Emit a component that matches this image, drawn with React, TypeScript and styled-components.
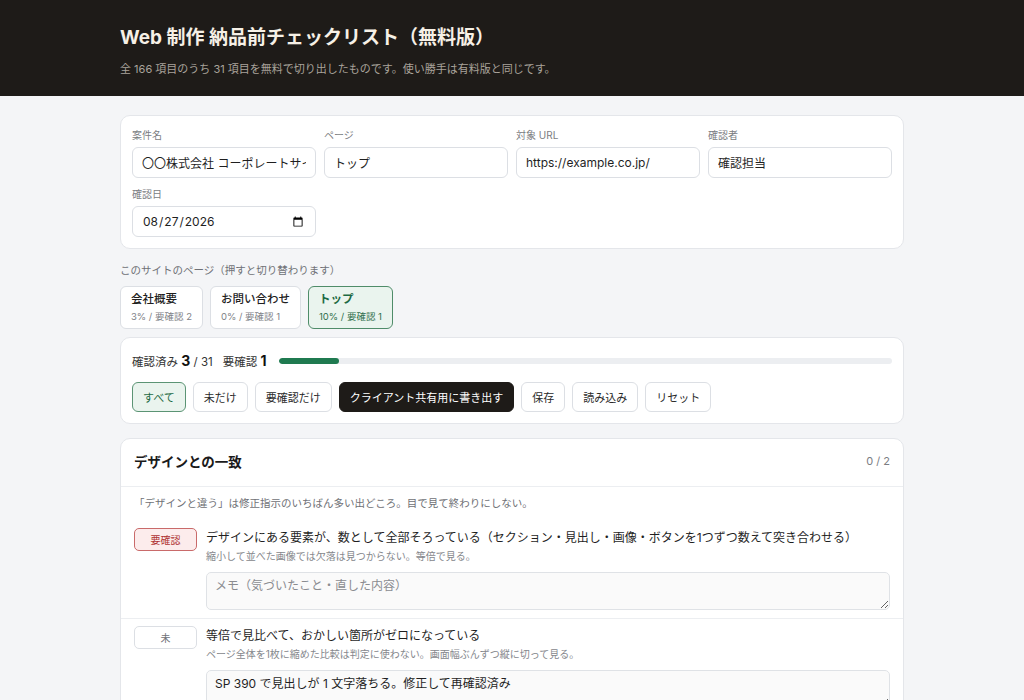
import React, { FC, useState } from 'react';
import styled, { createGlobalStyle, css } from 'styled-components';

const GlobalStyle = createGlobalStyle`
  body {
    margin: 0;
    background: #f4f5f7;
    font-family: 'Inter', 'Noto Sans CJK JP', sans-serif;
    color: #1f1f1f;
  }
  * { box-sizing: border-box; }
`;

type Status = 'none' | 'check' | 'ok';

interface Item {
  title: string;
  hint: string;
  memo: string;
  status: Status;
}

const pages = [
  { name: '会社概要', sub: '3% / 要確認 2', active: false },
  { name: 'お問い合わせ', sub: '0% / 要確認 1', active: false },
  { name: 'トップ', sub: '10% / 要確認 1', active: true },
];

const items: Item[] = [
  {
    title: 'デザインにある要素が、数として全部そろっている（セクション・見出し・画像・ボタンを1つずつ数えて突き合わせる）',
    hint: '縮小して並べた画像では欠落は見つからない。等倍で見る。',
    memo: '',
    status: 'check',
  },
  {
    title: '等倍で見比べて、おかしい箇所がゼロになっている',
    hint: 'ページ全体を1枚に縮めた比較は判定に使わない。画面幅ぶんずつ縦に切って見る。',
    memo: 'SP 390 で見出しが 1 文字落ちる。修正して再確認済み',
    status: 'none',
  },
];

const App: FC = () => {
  const [filter, setFilter] = useState('all');

  return (
    <>
      <GlobalStyle />
      <Header>
        <Inner>
          <Title>Web 制作 納品前チェックリスト（無料版）</Title>
          <Lead>全 166 項目のうち 31 項目を無料で切り出したものです。使い勝手は有料版と同じです。</Lead>
        </Inner>
      </Header>
      <Main>
        <Card>
          <FieldGrid>
            <Field>
              <Label>案件名</Label>
              <Input defaultValue="〇〇株式会社 コーポレートサイト リニューアル" />
            </Field>
            <Field>
              <Label>ページ</Label>
              <Input defaultValue="トップ" />
            </Field>
            <Field>
              <Label>対象 URL</Label>
              <Input defaultValue="https://example.co.jp/" />
            </Field>
            <Field>
              <Label>確認者</Label>
              <Input defaultValue="確認担当" />
            </Field>
            <Field>
              <Label>確認日</Label>
              <Input type="date" defaultValue="2026-08-27" />
            </Field>
          </FieldGrid>
        </Card>

        <PagesBlock>
          <SmallNote>このサイトのページ（押すと切り替わります）</SmallNote>
          <Tabs>
            {pages.map((p) => (
              <PageTab key={p.name} $active={p.active}>
                <strong>{p.name}</strong>
                <span>{p.sub}</span>
              </PageTab>
            ))}
          </Tabs>
        </PagesBlock>

        <Card>
          <ProgressRow>
            <Stat>
              確認済み <b>3</b> / 31
            </Stat>
            <Stat>
              要確認 <b>1</b>
            </Stat>
            <Bar>
              <BarFill style={{ width: `${(3 / 31) * 100}%` }} />
            </Bar>
          </ProgressRow>
          <ButtonRow>
            <Button $variant={filter === 'all' ? 'active' : 'plain'} onClick={() => setFilter('all')}>
              すべて
            </Button>
            <Button $variant={filter === 'none' ? 'active' : 'plain'} onClick={() => setFilter('none')}>
              未だけ
            </Button>
            <Button $variant={filter === 'check' ? 'active' : 'plain'} onClick={() => setFilter('check')}>
              要確認だけ
            </Button>
            <Button $variant="dark">クライアント共有用に書き出す</Button>
            <Button $variant="plain">保存</Button>
            <Button $variant="plain">読み込み</Button>
            <Button $variant="plain">リセット</Button>
          </ButtonRow>
        </Card>

        <Section>
          <SectionHead>
            <h2>デザインとの一致</h2>
            <Count>0 / 2</Count>
          </SectionHead>
          <SectionLead>「デザインと違う」は修正指示のいちばん多い出どころ。目で見て終わりにしない。</SectionLead>
          {items.map((it) => (
            <Row key={it.title}>
              <StatusButton $status={it.status}>{it.status === 'check' ? '要確認' : '未'}</StatusButton>
              <RowBody>
                <ItemTitle>{it.title}</ItemTitle>
                <ItemHint>{it.hint}</ItemHint>
                <Memo placeholder="メモ（気づいたこと・直した内容）" defaultValue={it.memo} />
              </RowBody>
            </Row>
          ))}
        </Section>
      </Main>
    </>
  );
};

export default App;

const Header = styled.header`
  background: #1e1b18;
  padding: 25px 0 19px;
`;

const Inner = styled.div`
  width: 784px;
  margin: 0 auto;
`;

const Title = styled.h1`
  margin: 0;
  font-size: 19px;
  line-height: 26px;
  font-weight: 700;
  color: #f6f0e6;
`;

const Lead = styled.p`
  margin: 10px 0 0;
  font-size: 11px;
  line-height: 16px;
  color: #a9a39b;
`;

const Main = styled.main`
  width: 784px;
  margin: 0 auto;
  padding: 19px 0 40px;
  display: flex;
  flex-direction: column;
  gap: 8px;
`;

const Card = styled.div`
  background: #fff;
  border: 1px solid #e4e6ea;
  border-radius: 10px;
  padding: 11px 11px 11px;
`;

const FieldGrid = styled.div`
  display: grid;
  grid-template-columns: repeat(4, 1fr);
  column-gap: 8px;
  row-gap: 8px;
`;

const Field = styled.label`
  display: flex;
  flex-direction: column;
  gap: 4px;
  min-width: 0;
`;

const Label = styled.span`
  font-size: 10px;
  line-height: 16px;
  color: #7b7d82;
`;

const Input = styled.input`
  height: 31px;
  width: 100%;
  border: 1px solid #dcdfe4;
  border-radius: 6px;
  padding: 0 9px;
  font-family: inherit;
  font-size: 12px;
  color: #1f1f1f;
  background: #fff;
`;

const PagesBlock = styled.div`
  padding-top: 6px;
  display: flex;
  flex-direction: column;
  gap: 7px;
`;

const SmallNote = styled.div`
  font-size: 10.5px;
  line-height: 16px;
  color: #6f7176;
`;

const Tabs = styled.div`
  display: flex;
  gap: 7px;
`;

const PageTab = styled.button<{ $active: boolean }>`
  display: flex;
  flex-direction: column;
  align-items: flex-start;
  gap: 2px;
  padding: 4px 10px 4px;
  border-radius: 6px;
  border: 1px solid #dcdfe4;
  background: #fff;
  font-family: inherit;
  cursor: pointer;
  text-align: left;

  strong {
    font-size: 11.5px;
    line-height: 17px;
    font-weight: 500;
    color: #1f1f1f;
  }
  span {
    font-size: 9.5px;
    line-height: 14px;
    color: #808287;
  }

  ${({ $active }) =>
    $active &&
    css`
      background: #eaf4ee;
      border-color: #4f8c69;
      strong {
        color: #1d6a43;
        font-weight: 700;
      }
      span {
        color: #2f6f4c;
      }
    `}
`;

const ProgressRow = styled.div`
  display: flex;
  align-items: center;
  gap: 10px;
  padding-top: 3px;
  font-size: 11.5px;
  color: #333;
`;

const Stat = styled.span`
  white-space: nowrap;
  b {
    font-size: 14px;
    font-weight: 700;
    color: #111;
  }
`;

const Bar = styled.div`
  flex: 1;
  height: 6px;
  margin-left: 3px;
  border-radius: 3px;
  background: #eceef1;
  overflow: hidden;
`;

const BarFill = styled.div`
  height: 100%;
  background: #1f7a50;
  border-radius: 3px;
`;

const ButtonRow = styled.div`
  display: flex;
  gap: 7px;
  margin-top: 13px;
`;

const Button = styled.button<{ $variant: 'plain' | 'active' | 'dark' }>`
  height: 30px;
  padding: 0 10px;
  border-radius: 6px;
  border: 1px solid #dcdfe4;
  background: #fff;
  font-family: inherit;
  font-size: 11px;
  color: #2a2a2a;
  cursor: pointer;

  ${({ $variant }) =>
    $variant === 'active' &&
    css`
      background: #eaf4ee;
      border-color: #5b9474;
      color: #1d6a43;
    `}
  ${({ $variant }) =>
    $variant === 'dark' &&
    css`
      background: #1e1b18;
      border-color: #1e1b18;
      color: #fff;
    `}
`;

const Section = styled.section`
  margin-top: 6px;
  background: #fff;
  border: 1px solid #e4e6ea;
  border-radius: 10px;
  overflow: hidden;
`;

const SectionHead = styled.div`
  display: flex;
  align-items: center;
  justify-content: space-between;
  height: 48px;
  padding: 0 13px 3px;
  border-bottom: 1px solid #eceef1;

  h2 {
    margin: 0;
    font-size: 13.5px;
    font-weight: 700;
    color: #1a1a1a;
  }
`;

const Count = styled.span`
  font-size: 11px;
  color: #7b7d82;
`;

const SectionLead = styled.p`
  margin: 0;
  padding: 9px 13px 9px 13px;
  font-size: 10.5px;
  line-height: 16px;
  color: #6f7176;
`;

const Row = styled.div`
  display: flex;
  gap: 9px;
  padding: 7px 13px 8px;
  & + & {
    border-top: 1px solid #eceef1;
  }
`;

const StatusButton = styled.button<{ $status: Status }>`
  flex: 0 0 63px;
  height: 23px;
  margin-top: 0;
  border-radius: 5px;
  border: 1px solid #dcdfe4;
  background: #fff;
  font-family: inherit;
  font-size: 10px;
  color: #6f7176;
  cursor: pointer;

  ${({ $status }) =>
    $status === 'check' &&
    css`
      background: #fcecec;
      border-color: #c96a6a;
      color: #b03434;
    `}
`;

const RowBody = styled.div`
  flex: 1;
  min-width: 0;
  display: flex;
  flex-direction: column;
`;

const ItemTitle = styled.div`
  font-size: 12px;
  line-height: 20px;
  color: #1f1f1f;
`;

const ItemHint = styled.div`
  margin-top: 1px;
  font-size: 10px;
  line-height: 15px;
  color: #85878c;
`;

const Memo = styled.textarea`
  margin-top: 8px;
  height: 38px;
  width: 100%;
  border: 1px solid #dfe2e6;
  border-radius: 5px;
  background: #fafafa;
  padding: 5px 8px;
  font-family: inherit;
  font-size: 12px;
  line-height: 16px;
  color: #1f1f1f;
  resize: vertical;

  &::placeholder {
    color: #8a8c91;
  }
`;
